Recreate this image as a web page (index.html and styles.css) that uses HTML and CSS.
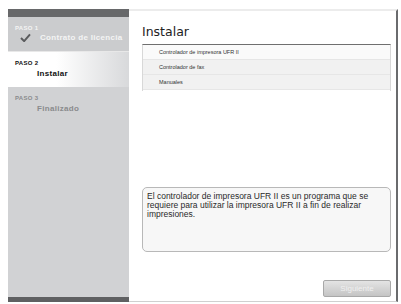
FILE: index.html
```html
<!DOCTYPE html>
<html lang="es">
<head>
  <meta charset="UTF-8">
  <title>Instalar</title>
  <link rel="stylesheet" href="styles.css">
</head>
<body>
  <div class="window">
    <!-- Steps -->
    <div class="sidebar">
      <div class="bar-top"></div>
      <div class="step done">
        <div class="step-label">PASO 1</div>
        <div class="step-name">
          <svg class="check" width="11" height="9" viewBox="0 0 12 10">
            <path d="M1 5.5 L4.5 9 L11 1.5" fill="none" stroke="#5a5b5d" stroke-width="2.2"/>
          </svg>
          Contrato de licencia
        </div>
      </div>
      <div class="step current">
        <div class="step-label">PASO 2</div>
        <div class="step-name">Instalar</div>
      </div>
      <div class="step todo">
        <div class="step-label">PASO 3</div>
        <div class="step-name">Finalizado</div>
      </div>
      <div class="bar-bottom"></div>
    </div>

    <!-- Content -->
    <div class="main">
      <h1>Instalar</h1>
      <div class="list">
        <div class="row">Controlador de impresora UFR II</div>
        <div class="row alt">Controlador de fax</div>
        <div class="row alt">Manuales</div>
      </div>
      <div class="desc">
        El controlador de impresora UFR II es un programa que se requiere para utilizar la impresora UFR II a fin de realizar impresiones.
      </div>
      <div class="actions">
        <button disabled>Siguiente</button>
      </div>
    </div>
  </div>
</body>
</html>
```

FILE: styles.css
```css
body {
  margin: 0;
  background: #ffffff;
  font-family: 'Liberation Sans', Arial, sans-serif;
}

.window {
  display: flex;
  margin: 9px 0 0 8px;
  height: 293px;
  width: 390px;
}

.sidebar {
  width: 121px;
  background: #d1d2d4;
  display: flex;
  flex-direction: column;
}

.bar-top {
  height: 8px;
  background: #67686a;
}

.bar-bottom {
  margin-top: auto;
  height: 5px;
  background: #5f6062;
}

.step {
  height: 35px;
  padding: 8px 0 0 7px;
  box-sizing: border-box;
  font-weight: bold;
}

.step-label {
  font-size: 6px;
  letter-spacing: 0.3px;
}

.step-name {
  font-size: 8px;
  margin: 3px 0 0 22px;
  letter-spacing: 0.3px;
}

.done {
  background: #cbccce;
  color: #f4f4f4;
  border-bottom: 1px solid #e8e8e8;
}

.done .step-name {
  margin: 2px 0 0 5px;
  display: flex;
  align-items: center;
  gap: 9px;
}

.current {
  background: linear-gradient(to right, #ffffff 40%, #d8d9db);
  color: #111111;
}

.todo {
  color: #8a8b8d;
}

.main {
  flex: 1;
  background: #ffffff;
  border-top: 2px solid #ececec;
  border-right: 2px solid #6a6b6d;
  border-bottom: 1px solid #d0d0d0;
  padding: 0 5px 0 13px;
  display: flex;
  flex-direction: column;
}

h1 {
  font-family: 'DejaVu Sans', sans-serif;
  font-weight: normal;
  font-size: 12.5px;
  color: #222222;
  margin: 13px 0 5px;
}

.list {
  border-top: 1px solid #6f6f6f;
  border-left: 1px solid #d8d8d8;
  border-right: 1px solid #d8d8d8;
  padding: 0 0 1px 0;
}

.row {
  height: 14px;
  line-height: 14px;
  font-size: 5.5px;
  color: #333333;
  padding-left: 16px;
  border-bottom: 1px solid #e6e6e6;
  background: #fafafa;
}

.row.alt {
  background: #f1f1f1;
}

.desc {
  margin-top: 96px;
  height: 65px;
  border: 1px solid #b8b8b8;
  border-radius: 5px;
  background: #f7f7f7;
  padding: 4px 4px;
  font-size: 8.5px;
  line-height: 9px;
  color: #2a2a2a;
  box-sizing: border-box;
}

.actions {
  margin-top: auto;
  padding-bottom: 4px;
  display: flex;
  justify-content: flex-end;
}

button {
  width: 68px;
  height: 17px;
  font-family: 'Liberation Sans', Arial, sans-serif;
  font-size: 8px;
  color: #f0f0f0;
  background: linear-gradient(#e4e4e4, #c4c4c4);
  border: 1px solid #a8a8a8;
  border-radius: 2px;
}
```
